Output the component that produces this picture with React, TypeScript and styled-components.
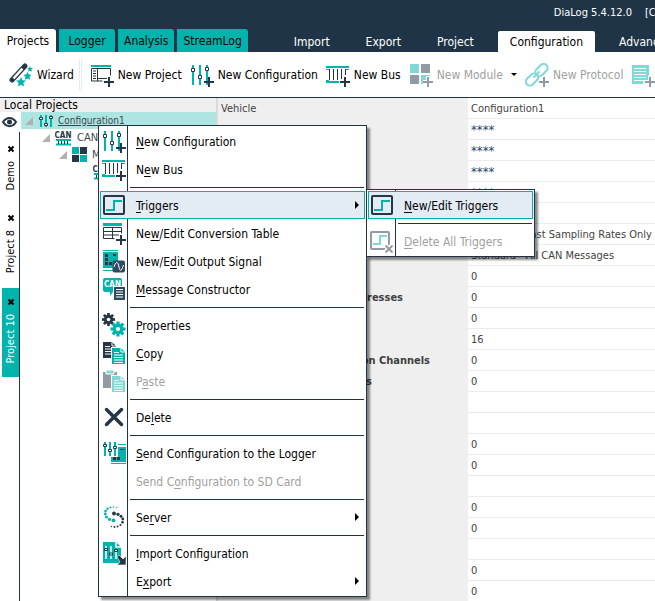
import React from "react";
import styled, { createGlobalStyle, css } from "styled-components";

const teal = "#00b4ad";
const dark = "#253746";
const navy = "#1f3547";
const softTeal = "#80d9d6";
const softDark = "#929ba3";

const GlobalStyle = createGlobalStyle`
  *, *::before, *::after { box-sizing: border-box; }
  html, body { margin: 0; height: 100%; overflow: hidden; }
  body, button, table {
    font-family: "DejaVu Sans Condensed", "DejaVu Sans", sans-serif;
    font-size: 12px;
    line-height: 16px;
  }
  button { margin: 0; padding: 0; border: 0; background: none; color: inherit; white-space: nowrap; }
`;

const Page = styled.div`
  display: flex;
  flex-direction: column;
  height: 100vh;
  overflow: hidden;
  background: #fff;
  color: #000;
`;

/* ---------- header ---------- */

const Header = styled.header`
  display: flex;
  flex-direction: column;
  flex: none;
  background: ${navy};
  overflow: hidden;
`;

const TitleBar = styled.div`
  display: flex;
  gap: 13px;
  justify-content: flex-end;
  height: 29px;
  padding-top: 5px;
  color: #fff;
  font-size: 11px;
  white-space: pre;
`;

const TitleCrop = styled.span`
  width: 10px;
  overflow: hidden;
`;

const TabBar = styled.nav`
  display: flex;
  align-items: flex-start;
  height: 23px;
`;

const ModeTabs = styled.div`
  display: flex;
  gap: 3px;
  flex: none;
`;

const ModeTab = styled.button<{ $active?: boolean }>`
  height: 24px;
  min-width: 56px;
  padding: 0 6px;
  border-radius: 0 3px 0 0;
  background: ${(p) => (p.$active ? "#fff" : teal)};
`;

const RibbonTabs = styled.div`
  display: flex;
  gap: 12px;
  margin: 2px 0 0 34px;
`;

const RibbonTab = styled.button<{ $active?: boolean }>`
  height: 21px;
  padding: 1px 12px 0;
  border-radius: 2px 2px 0 0;
  color: ${(p) => (p.$active ? "#000" : "#fff")};
  background: ${(p) => (p.$active ? "#fff" : "transparent")};
`;

const Toolbar = styled.div`
  display: flex;
  align-items: center;
  gap: 8px;
  flex: none;
  height: 46px;
  padding-left: 9px;
  border-bottom: 1px solid ${navy};
  overflow: hidden;
`;

const ToolButton = styled.button`
  display: flex;
  align-items: center;
  gap: 4px;
  flex: none;
  &:disabled { color: #a0a0a0; }
`;

const ToolDivider = styled.span`
  flex: none;
  width: 3px;
  height: 32px;
  margin: 0 0 0 -3px;
  border: 1px solid #e3ebf6;
  border-radius: 1px;
`;

const DropArrow = styled.span`
  margin-left: 4px;
  border: 3px solid transparent;
  border-top-color: #000;
  border-bottom: 0;
`;

/* ---------- body ---------- */

const Body = styled.div`
  display: flex;
  flex: 1;
  min-height: 0;
  overflow: hidden;
`;

const LeftPane = styled.section`
  display: grid;
  grid-template-columns: 21px 1fr;
  grid-template-rows: 14px 1fr;
  flex: 0 0 218px;
  border-right: 2px solid #d9d9d9;
`;

const PaneTitle = styled.h2`
  grid-column: 1 / -1;
  margin: 0;
  padding-left: 4px;
  background: #efefef;
  font-size: 12px;
  font-weight: 400;
  line-height: 14px;
`;

const Rail = styled.div`
  display: flex;
  flex-direction: column;
`;

const EyeSlot = styled.div`
  display: flex;
  align-items: center;
  height: 20px;
  padding-left: 2px;
`;

const RailTabs = styled.div`
  flex: 1;
  width: 20px;
  padding: 3px 0 0 2px;
  border-right: 1px solid ${navy};
`;

const RailTab = styled.div<{ $active?: boolean }>`
  display: flex;
  flex-direction: column;
  align-items: center;
  gap: 8px;
  padding: 10px 0 14px;
  background: ${(p) => (p.$active ? teal : "transparent")};
  color: ${(p) => (p.$active ? "#fff" : "#000")};
`;

const CloseButton = styled.button`
  display: flex;
  height: 8px;
  color: #000;
`;

const RailLabel = styled.button`
  writing-mode: vertical-rl;
  transform: rotate(180deg);
  font-size: 11px;
  line-height: 16px;
`;

const Tree = styled.ul`
  margin: 0;
  padding: 0;
  list-style: none;
  overflow: hidden;
`;

const TreeRow = styled.li<{ $level: number; $active?: boolean }>`
  display: flex;
  align-items: center;
  gap: 5px;
  height: 17px;
  padding-left: ${(p) => 4 + p.$level * 17}px;
  background: ${(p) => (p.$active ? "#ade5e3" : "transparent")};
  color: #3c4650;
  font-size: ${(p) => (p.$active ? 10 : 11)}px;
  text-decoration: ${(p) => (p.$active ? "underline" : "none")};
  white-space: nowrap;
`;

const PropertyPane = styled.section`
  flex: 1;
  min-width: 0;
  overflow: hidden;
`;

const PropertyTable = styled.table`
  width: 100%;
  table-layout: fixed;
  border-collapse: separate;
  border-spacing: 0;
  font-size: 11px;
  color: #3f3f3f;
`;

const cell = css`
  height: 21px;
  padding: 1px 3px 0;
  text-align: left;
  white-space: nowrap;
  overflow: hidden;
`;

const LabelCell = styled.th<{ $bold?: boolean }>`
  ${cell}
  width: 250px;
  background: #efefef;
  font-weight: ${(p) => (p.$bold ? 700 : 400)};
`;

const LabelTail = styled.span<{ $end: number }>`
  display: block;
  width: ${(p) => p.$end}px;
  text-align: right;
`;

const ValueCell = styled.td<{ $masked?: boolean }>`
  ${cell}
  border-bottom: 1px solid #ececec;
  color: ${(p) => (p.$masked ? "#1f4468" : "inherit")};
  font-size: ${(p) => (p.$masked ? 13 : 11)}px;
`;

/* ---------- menus ---------- */

const MenuPanel = styled.div<{ $x: number; $y: number; $width: number }>`
  position: absolute;
  z-index: 1;
  left: ${(p) => p.$x}px;
  top: ${(p) => p.$y}px;
  width: ${(p) => p.$width}px;
  padding: 1px;
  border: 1px solid ${navy};
  background: linear-gradient(${navy}, ${navy}) 28px 0 / 1px 100% no-repeat #fff;
  box-shadow: 3px 3px 2px rgba(0, 0, 0, 0.45);
`;

const MenuItem = styled.button<{ $active?: boolean }>`
  display: flex;
  align-items: center;
  gap: 10px;
  width: 100%;
  height: 28px;
  padding: 0 5px 0 1px;
  border: 1px solid ${(p) => (p.$active ? teal : "transparent")};
  background: ${(p) => (p.$active ? "#e3ebf3" : "transparent")};
  text-align: left;
  &:disabled { color: #a0a0a0; }
`;

const ItemText = styled.span`
  flex: 1;
  padding-top: 2px;
  u { text-underline-offset: 2px; }
`;

const IconSlot = styled.span`
  flex: none;
  width: 24px;
  height: 24px;
`;

const MenuLine = styled.div`
  height: 1px;
  margin: 4px 1px 3px 30px;
  background: ${navy};
`;

const SubArrow = styled.span`
  border: 4px solid transparent;
  border-left-color: #000;
  border-right: 0;
`;

/* ---------- icons ---------- */

const Svg = ({ children, w = 24, h = 24 }: { children: React.ReactNode; w?: number; h?: number }) => (
  <svg width={w} height={h} viewBox={`0 0 ${w} ${h}`} fill="none" aria-hidden="true" display="block">
    {children}
  </svg>
);

const Plus = ({ color = dark }: { color?: string }) => (
  <>
    <path d="M19 12.500v13M12.500 19h13" stroke="#fff" strokeWidth="4" />
    <path d="M19 14v10M14 19h10" stroke={color} strokeWidth="2" />
  </>
);

const SlidersIcon = () => (
  <Svg>
    <path d="M3 2v20M10 2v20M17 2v20" stroke={teal} strokeWidth="2" />
    <path d="M1.500 5.500h3v3h-3zM8.500 12.500h3v3h-3zM15.500 4.500h3v3h-3z" fill="#fff" stroke={dark} />
    <path d="M19 14v10M14 19h10" stroke={dark} strokeWidth="2" />
  </Svg>
);

const BusIcon = () => (
  <Svg>
    <path d="M0 4h23M0 19h13" stroke={teal} strokeWidth="2" />
    <path d="M0 6.500h3M20 6.500h3M0 17.500h3" stroke={teal} />
    <path d="M3.500 6v11M7.500 6v11M11.500 6v11M15.500 6v10M19.500 6v6" stroke={dark} />
    <path d="M19 14v10M14 19h10" stroke={dark} strokeWidth="2" />
  </Svg>
);

const TriggerIcon = () => (
  <Svg>
    <rect x="2" y="3" width="20" height="18" rx="1" stroke={dark} strokeWidth="2" />
    <path d="M4 17h8V8h8" stroke={teal} strokeWidth="2" />
  </Svg>
);

const TriggerDeleteIcon = () => (
  <Svg>
    <rect x="1" y="3" width="18" height="17" rx="1" stroke={softDark} strokeWidth="2" />
    <path d="M3 15h7V7h7" stroke={softTeal} strokeWidth="2" />
    <path d="M14 15l9 9M23 15l-9 9" stroke="#fff" strokeWidth="4" />
    <path d="M15.500 16.500l7 7M22.500 16.500l-7 7" stroke={softDark} strokeWidth="2" />
  </Svg>
);

const TableIcon = () => (
  <Svg>
    <path d="M1 3.500h19" stroke={teal} strokeWidth="3" />
    <path d="M1.500 6.500h18v11h-18zM1 10.500h18M1 14h18M10.500 6.500v11" stroke={dark} />
    <Plus />
  </Svg>
);

const OutputIcon = () => (
  <Svg>
    <path d="M1 1.500h15M1 21.500h10" stroke={teal} />
    <path d="M1 3h15v16H1z" fill={teal} />
    <path d="M3 5h3v3H3zM3 9h3v3H3zM3 13h3v3H3zM7 13h3v3H7zM11 5h3v2h-3z" fill={dark} />
    <rect x="10.500" y="11.500" width="12.500" height="12" rx="2" fill="#2f4a63" />
    <path d="M12 18c2-6 4-6 5 0s3 3 4.500-2" stroke="#fff" />
  </Svg>
);

const MessageIcon = () => (
  <Svg>
    <path d="M3 1h15a2 2 0 0 1 2 2v10a2 2 0 0 1-2 2h-7l-3 4v-4H3a2 2 0 0 1-2-2V3a2 2 0 0 1 2-2z" fill={teal} />
    <text x="10.500" y="9.500" fill="#fff" fontSize="8" fontWeight="700" fontFamily="DejaVu Sans Condensed, sans-serif" textAnchor="middle">CAN</text>
    <path d="M11 9h13v15H11z" fill="#fff" />
    <path d="M12 10h11v13H12z" fill="#2f4a63" />
    <path d="M14 12.500h7M14 15h7M14 17.500h7M14 20h7" stroke="#fff" />
  </Svg>
);

const Gear = ({ cx, cy, r, color }: { cx: number; cy: number; r: number; color: string }) => (
  <g transform={`translate(${cx} ${cy})`}>
    {[0, 45, 90, 135].map((a) => (
      <path key={a} d={`M0 ${-r}V${r}`} stroke={color} strokeWidth={r / 2.400} transform={`rotate(${a})`} />
    ))}
    <circle r={r * 0.720} fill={color} />
    <circle r={r * 0.280} fill="#fff" />
  </g>
);

const GearsIcon = () => (
  <Svg>
    <Gear cx={6.500} cy={6.500} r={6.500} color={dark} />
    <Gear cx={16} cy={16} r={7.500} color={teal} />
  </Svg>
);

const FrontDoc = ({ color }: { color: string }) => (
  <>
    <path d="M9 6h15v18H9z" fill="#fff" />
    <path d="M10 7h9l4 4v12H10z" fill={color} />
    <path d="M19 7v4h4M12 11.500h5M12 14h9M12 16.500h9M12 19h9M12 21.500h9" stroke="#fff" />
  </>
);

const CopyIcon = () => (
  <Svg>
    <path d="M1 1h9l4 4v12H1z" fill={dark} />
    <path d="M10 1v4h4M3 5.500h5M3 8h9M3 10.500h9M3 13h9" stroke="#fff" />
    <FrontDoc color={teal} />
  </Svg>
);

const PasteIcon = () => (
  <Svg>
    <path d="M1 3h14v16H1z" fill={softDark} />
    <path d="M4 1h8v4H4z" fill={softTeal} stroke="#fff" />
    <FrontDoc color={softTeal} />
  </Svg>
);

const DeleteIcon = () => (
  <Svg>
    <path d="M4.500 4.500l15 15M19.500 4.500l-15 15" stroke={dark} strokeWidth="3.500" strokeLinecap="round" />
  </Svg>
);

const SendIcon = () => (
  <Svg>
    <path d="M3 1v14M8 1v14M13 1v14" stroke={teal} strokeWidth="2" />
    <path d="M16 3.500h8M9 22.500h15" stroke={teal} />
    <path d="M16 6h8v15H9v-5h7z" fill={teal} />
    <path d="M1.500 3.500h3v2h-3zM6.500 8.500h3v2h-3zM11.500 5.500h3v2h-3z" fill="#fff" stroke={dark} />
    <path d="M11 16h3v3h-3zM15 16h3v3h-3zM18 8h4v1h-4z" fill={dark} />
  </Svg>
);

const tealDots = [[14.700, 2.500, 0.700], [11.500, 2, 0.800], [8.500, 2.500, 1], [5.500, 3.700, 1.200], [3.500, 6, 1.300], [3.300, 9, 1.400], [4.500, 12, 1.500], [7.500, 14.300, 1.600], [11.500, 15.300, 1.900]];
const darkDots = [[12, 8.500, 1.900], [16, 9.300, 1.600], [19, 11.300, 1.500], [20.800, 14, 1.400], [20.500, 17.200, 1.300], [18.500, 20, 1.100], [15.500, 21.500, 1], [12.500, 22, 0.900], [9.500, 21.500, 0.700]];

const ServerIcon = () => (
  <Svg>
    {tealDots.map(([x, y, r]) => <circle key={`${x}-${y}`} cx={x} cy={y} r={r} fill={teal} />)}
    {darkDots.map(([x, y, r]) => <circle key={`${x}-${y}`} cx={x} cy={y} r={r} fill={dark} />)}
  </Svg>
);

const ImportIcon = () => (
  <Svg>
    <path d="M1 1h13l5 5v16H1z" fill={teal} />
    <path d="M14 1v5h5M4 5v13M9 5v13M14 8v10" stroke="#fff" strokeWidth="1.500" />
    <path d="M2.500 7.500h3v2h-3zM7.500 12h3v2h-3zM12.500 8.500h3v2h-3z" fill="#fff" stroke={dark} />
    <path d="M15 16l2-2 4 4 3-3v9h-9l3-3z" fill={dark} stroke="#fff" strokeWidth="0.600" />
  </Svg>
);

const Star = ({ x, y, s }: { x: number; y: number; s: number }) => (
  <path
    transform={`translate(${x} ${y}) scale(${s})`}
    d="M0-5l1.500 3.200 3.500.4-2.600 2.400.7 3.500L0 2.800l-3.100 1.700.7-3.500L-5-1.400l3.500-.4z"
    fill={teal}
  />
);

const WizardIcon = () => (
  <Svg>
    <path d="M3 17L16 3" stroke={dark} strokeWidth="5" strokeLinecap="round" />
    <path d="M4.500 15.500L13.500 5.700" stroke="#fff" strokeWidth="2.500" />
    <Star x={21} y={6} s={0.600} />
    <Star x={18.500} y={13} s={0.850} />
    <Star x={12} y={19} s={1} />
  </Svg>
);

const ProjectIcon = () => (
  <Svg>
    <path d="M1 3h20" stroke={teal} strokeWidth="2" />
    <path d="M1.500 5.500h19v12.500h-19zM7.500 5.500v12.500M7.500 15.500h13" stroke={dark} />
    <path d="M3 8h3M3 10.500h3M3 13h3M3 15.500h3" stroke={dark} />
    <Plus />
  </Svg>
);

const ModuleIcon = () => (
  <Svg>
    <path d="M1 1h9v9H1zM12 12h9v9h-9z" fill={softTeal} />
    <path d="M12 1h9v9h-9zM1 12h9v9H1z" fill={softDark} />
    <path d="M19 13v11M14 19h10" stroke="#fff" strokeWidth="4" />
    <path d="M19 14v10M14 19h10" stroke={softDark} strokeWidth="2" />
  </Svg>
);

const ProtocolIcon = () => (
  <Svg>
    <g stroke={softTeal} strokeWidth="2">
      <rect x="-7" y="-4" width="14" height="8" rx="4" transform="translate(16.500 7) rotate(-45)" />
      <rect x="-7" y="-4" width="14" height="8" rx="4" transform="translate(7 16.500) rotate(-45)" />
      <path d="M8.500 14.500l6-6" />
    </g>
    <path d="M19 14v10M14 19h10" stroke={softDark} strokeWidth="2" />
  </Svg>
);

const SheetIcon = () => (
  <Svg>
    <path d="M1 2h17v19H1z" fill={softTeal} />
    <path d="M3 5.500h12M3 8.500h12M3 11.500h12M3 14.500h12M3 17.500h12" stroke="#fff" />
    <Plus color={softDark} />
  </Svg>
);

const EyeIcon = () => (
  <Svg w={15} h={12}>
    <path d="M1 6c3.500-5.500 9.500-5.500 13 0-3.500 5.500-9.500 5.500-13 0z" stroke={dark} strokeWidth="2" />
    <circle cx="7.500" cy="6" r="2.500" fill={dark} />
  </Svg>
);

const CloseIcon = () => (
  <Svg w={8} h={8}>
    <path d="M1.500 1.500l5 5M6.500 1.500l-5 5" stroke="#000" strokeWidth="2" />
  </Svg>
);

const Expander = () => (
  <Svg w={8} h={8}>
    <path d="M8 0v8H0z" fill="#b0b0b0" />
  </Svg>
);

const SmallSliders = () => (
  <Svg w={15} h={14}>
    <path d="M3 1v12M8 1v12M13 1v12" stroke={teal} strokeWidth="2" />
    <path d="M1.500 3.500h3v2h-3zM6.500 9.500h3v2h-3zM11.500 2.500h3v2h-3z" fill="#fff" stroke={dark} />
  </Svg>
);

const SmallCan = () => (
  <Svg w={17} h={16}>
    <text x="8" y="8" fill={dark} fontSize="8" fontWeight="700" fontFamily="DejaVu Sans Condensed, sans-serif" textAnchor="middle">CAN</text>
    <path d="M1 10h15M1 14.500h15" stroke={teal} strokeWidth="2" />
    <path d="M3.500 11v3M6.500 11v3M9.500 11v3M12.500 11v3" stroke={dark} />
  </Svg>
);

const SmallModules = () => (
  <Svg w={15} h={15}>
    <path d="M0 0h7v7H0zM8 8h7v7H8z" fill={teal} />
    <path d="M8 0h7v7H8zM0 8h7v7H0z" fill={dark} />
  </Svg>
);

/* ---------- data ---------- */

type Entry = { label: string; icon?: React.ReactNode; disabled?: boolean; active?: boolean; sub?: boolean } | null;

const mainMenu: Entry[] = [
  { label: "&New Configuration", icon: <SlidersIcon /> },
  { label: "N&ew Bus", icon: <BusIcon /> },
  null,
  { label: "&Triggers", icon: <TriggerIcon />, active: true, sub: true },
  { label: "Ne&w/Edit Conversion Table", icon: <TableIcon /> },
  { label: "New/E&dit Output Signal", icon: <OutputIcon /> },
  { label: "&Message Constructor", icon: <MessageIcon /> },
  null,
  { label: "&Properties", icon: <GearsIcon /> },
  { label: "&Copy", icon: <CopyIcon /> },
  { label: "P&aste", icon: <PasteIcon />, disabled: true },
  null,
  { label: "De&lete", icon: <DeleteIcon /> },
  null,
  { label: "&Send Configuration to the Logger", icon: <SendIcon /> },
  { label: "Send C&onfiguration to SD Card", disabled: true },
  null,
  { label: "Se&rver", icon: <ServerIcon />, sub: true },
  null,
  { label: "&Import Configuration", icon: <ImportIcon /> },
  { label: "E&xport", sub: true },
];

const triggerMenu: Entry[] = [
  { label: "&New/Edit Triggers", icon: <TriggerIcon />, active: true },
  null,
  { label: "&Delete All Triggers", icon: <TriggerDeleteIcon />, disabled: true },
];

const tools = [
  { label: "New Project", icon: <ProjectIcon /> },
  { label: "New Configuration", icon: <SlidersIcon /> },
  { label: "New Bus", icon: <BusIcon /> },
  { label: "New Module", icon: <ModuleIcon />, disabled: true, drop: true },
  { label: "New Protocol", icon: <ProtocolIcon />, disabled: true },
  { label: "", icon: <SheetIcon />, disabled: true },
];

type Property = { value?: string; label?: string; tail?: string; end?: number };

const properties: Property[] = [
  { label: "Vehicle", value: "Configuration1" },
  { value: "****" },
  { value: "****" },
  { value: "****" },
  { value: "****" },
  {},
  { value: "Standard - Fast Sampling Rates Only" },
  { value: "Standard - All CAN Messages" },
  { value: "0" },
  { value: "0", tail: "resses", end: 182 },
  { value: "0" },
  { value: "16" },
  { value: "0", tail: "on Channels", end: 209 },
  { value: "0", tail: "s", end: 151 },
  {},
  {},
  { value: "0" },
  { value: "0" },
  {},
  { value: "0" },
  { value: "0" },
  {},
  { value: "0" },
  { value: "0" },
];

const Accel = ({ text }: { text: string }) => {
  const [before, after] = text.split("&");
  return <ItemText>{before}<u>{after[0]}</u>{after.slice(1)}</ItemText>;
};

const Menu = ({ items, x, y, width, label }: { items: Entry[]; x: number; y: number; width: number; label: string }) => (
  <MenuPanel role="menu" aria-label={label} $x={x} $y={y} $width={width}>
    {items.map((item, i) =>
      item ? (
        <MenuItem key={item.label} role="menuitem" $active={item.active} disabled={item.disabled} aria-haspopup={item.sub ? "menu" : undefined}>
          <IconSlot>{item.icon}</IconSlot>
          <Accel text={item.label} />
          {item.sub && <SubArrow />}
        </MenuItem>
      ) : (
        <MenuLine key={i} role="separator" />
      ),
    )}
  </MenuPanel>
);

export default function App() {
  return (
    <Page>
      <GlobalStyle />
      <Header>
        <TitleBar>
          <span>DiaLog 5.4.12.0</span>
          <TitleCrop>[C</TitleCrop>
        </TitleBar>
        <TabBar>
          <ModeTabs>
            {["Projects", "Logger", "Analysis", "StreamLog"].map((t, i) => (
              <ModeTab key={t} $active={i === 0}>{t}</ModeTab>
            ))}
          </ModeTabs>
          <RibbonTabs>
            {["Import", "Export", "Project", "Configuration", "Advanced"].map((t, i) => (
              <RibbonTab key={t} $active={i === 3}>{t}</RibbonTab>
            ))}
          </RibbonTabs>
        </TabBar>
      </Header>
      <Toolbar>
        <ToolButton><WizardIcon />Wizard</ToolButton>
        <ToolDivider />
        {tools.map((t) => (
          <ToolButton key={t.label} disabled={t.disabled} aria-label={t.label || "New Sheet"}>
            {t.icon}
            {t.label}
            {t.drop && <DropArrow />}
          </ToolButton>
        ))}
      </Toolbar>
      <Body>
        <LeftPane>
          <PaneTitle>Local Projects</PaneTitle>
          <Rail>
            <EyeSlot><EyeIcon /></EyeSlot>
            <RailTabs>
              {["Demo", "Project 8", "Project 10"].map((t, i) => (
                <RailTab key={t} $active={i === 2}>
                  <CloseButton aria-label={`Close ${t}`}><CloseIcon /></CloseButton>
                  <RailLabel>{t}</RailLabel>
                </RailTab>
              ))}
            </RailTabs>
          </Rail>
          <Tree>
            <TreeRow $level={0} $active><Expander /><SmallSliders />Configuration1</TreeRow>
            <TreeRow $level={1}><Expander /><SmallCan />CAN</TreeRow>
            <TreeRow $level={2}><Expander /><SmallModules />M</TreeRow>
            <TreeRow $level={4}><SmallCan /></TreeRow>
          </Tree>
        </LeftPane>
        <PropertyPane>
          <PropertyTable>
            <tbody>
              {properties.map((p, i) => (
                <tr key={i}>
                  <LabelCell scope="row" $bold={!!p.tail}>
                    {p.label}
                    {p.tail && <LabelTail $end={p.end ?? 0}>{p.tail}</LabelTail>}
                  </LabelCell>
                  <ValueCell $masked={p.value === "****"}>{p.value}</ValueCell>
                </tr>
              ))}
            </tbody>
          </PropertyTable>
        </PropertyPane>
      </Body>
      <Menu label="Configuration" items={mainMenu} x={98} y={125} width={269} />
      <Menu label="Triggers" items={triggerMenu} x={366} y={189} width={169} />
    </Page>
  );
}
